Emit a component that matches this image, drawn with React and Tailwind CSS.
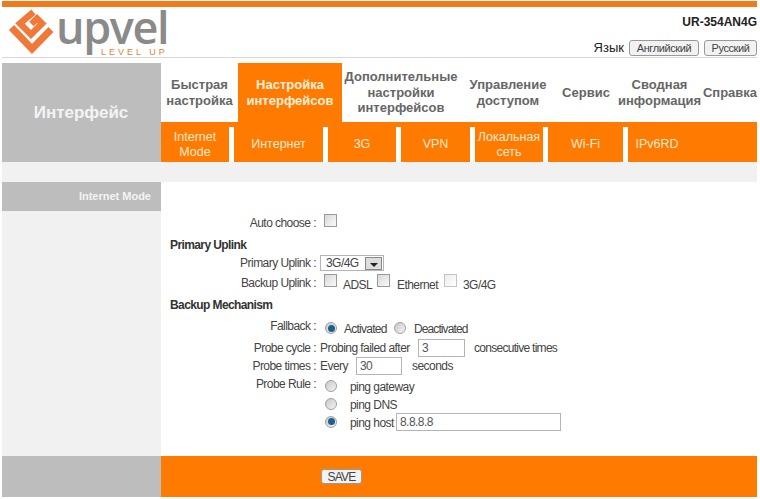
const font = 'font-["Liberation_Sans",Arial,sans-serif]'

function Check({ light }) {
  return (
    <span className={`inline-block h-[13px] w-[13px] shrink-0 border bg-gradient-to-br ${light ? 'border-[#c4c4c4] from-[#ececec] to-white' : 'border-[#9a9a9a] from-[#d8d8d8] to-[#fafafa]'}`} />
  )
}

function Radio({ on }) {
  return (
    <span className="flex h-[12px] w-[12px] shrink-0 items-center justify-center rounded-full border border-[#a0a0a0] bg-gradient-to-br from-[#c8c8c8] to-[#f4f4f4]">
      {on ? <span className="h-[7px] w-[7px] rounded-full bg-[#1d5f8f]" /> : null}
    </span>
  )
}

function Field({ className, children }) {
  return (
    <span className={`flex h-[18px] items-center border border-[#b5b5b5] bg-white pl-[3px] text-[#555] ${className}`}>
      {children}
    </span>
  )
}

function Row({ label, h, children }) {
  return (
    <div className={`flex items-center ${h}`}>
      <span className="w-[148px] pr-[2px] text-right text-[#444]">{label}</span>
      <div className="flex items-center text-[#444]">{children}</div>
    </div>
  )
}

const tabs = [
  { t: ['Быстрая', 'настройка'], w: 'w-[77px]' },
  { t: ['Настройка', 'интерфейсов'], w: 'w-[104px]', on: true },
  { t: ['Дополнительные', 'настройки', 'интерфейсов'], w: 'w-[118px]' },
  { t: ['Управление', 'доступом'], w: 'w-[96px]' },
  { t: ['Сервис'], w: 'w-[60px]' },
  { t: ['Сводная', 'информация'], w: 'w-[87px]' },
  { t: ['Справка'], w: 'w-[54px]' },
]

const subs = [
  { t: ['Internet', 'Mode'], w: 'w-[73px]' },
  { t: ['Интернет'], w: 'w-[94px]' },
  { t: ['3G'], w: 'w-[73px]' },
  { t: ['VPN'], w: 'w-[74px]' },
  { t: ['Локальная', 'сеть'], w: 'w-[73px]' },
  { t: ['Wi-Fi'], w: 'w-[80px]' },
  { t: ['IPv6RD'], w: 'w-[58px]' },
]

export default function App() {
  return (
    <div className={`${font} h-[499px] w-[760px] overflow-hidden bg-white pt-px pl-[2px] text-[12px] tracking-[-0.55px]`}>
      <div className="h-[6px] w-[755px] bg-[#f27a1a]" />
      <div className="flex h-[51px] w-[755px] border-b border-[#d8d8d8]">
        <div className="flex">
          <svg width="58" height="50" viewBox="2 7 58 50" className="shrink-0">
            <polyline points="11.5,27.5 32,49 51,29.5" fill="none" stroke="#f0793a" strokeWidth="7" />
            <polyline points="33.5,12 20,23.5 31,34.5 42,23.5 37,18.5 31.5,24" fill="none" stroke="#f0793a" strokeWidth="6.5" />
          </svg>
          <div className="relative -ml-[4px] w-[110px]">
            <span className="-mt-[5px] block font-['Open_Sans',sans-serif] text-[45px] leading-[50px] font-semibold tracking-[-1.4px] text-[#8a8a8a]">upvel</span>
            <span className="absolute top-[41px] left-[45px] text-[9px] leading-[9px] tracking-[3px] whitespace-nowrap text-[#e8823a]">LEVEL UP</span>
          </div>
        </div>
        <div className="ml-auto flex flex-col items-end">
          <div className="mt-[6px] text-[12px] font-bold tracking-normal text-[#222]">UR-354AN4G</div>
          <div className="mt-[7px] flex items-center gap-[5px]">
            <span className="text-[13px] tracking-normal text-[#222]">Язык</span>
            <span className="flex h-[16px] w-[70px] items-center justify-center rounded-[3px] border border-[#999] bg-[#f2f2f2] text-[11px] tracking-[-0.4px] text-[#444]">Английский</span>
            <span className="flex h-[16px] w-[53px] items-center justify-center rounded-[3px] border border-[#999] bg-[#f2f2f2] text-[11px] tracking-[-0.4px] text-[#444]">Русский</span>
          </div>
        </div>
      </div>
      <div className="mt-[5px] flex h-[99px] w-[755px]">
        <div className="flex w-[159px] shrink-0 items-center justify-center bg-[#bdbdbd] pr-px">
          <span className="text-[17px] font-bold tracking-normal text-[#f4f4f4]">Интерфейс</span>
        </div>
        <div className="flex flex-1 flex-col">
          <div className="flex h-[59px]">
            {tabs.map((tab) => (
              <div
                key={tab.t[0]}
                className={`flex shrink-0 flex-col items-center justify-center text-[13px] leading-[15.5px] font-bold tracking-normal ${tab.w} ${tab.on ? 'bg-[#ff7a00] text-[#fff0dc]' : 'text-[#666]'}`}
              >
                {tab.t.map((line) => (
                  <span key={line} className="whitespace-nowrap">{line}</span>
                ))}
              </div>
            ))}
          </div>
          <div className="flex h-[40px] items-end bg-[#ff7a00]">
            {subs.map((s, i) => (
              <div
                key={s.t[0]}
                className={`flex h-[35px] shrink-0 flex-col items-center justify-center text-[12.5px] leading-[15px] tracking-normal text-[#ffe9cf] ${s.w} ${i < 6 ? 'border-r-[5px] border-white' : ''}`}
              >
                {s.t.map((line) => (
                  <span key={line} className="whitespace-nowrap">{line}</span>
                ))}
              </div>
            ))}
          </div>
        </div>
      </div>
      <div className="h-[20px] w-[755px] bg-[#f1f1f1]" />
      <div className="flex h-[274px] w-[755px]">
        <div className="w-[159px] shrink-0 bg-[#f1f1f1]">
          <div className="flex h-[29px] items-center justify-end bg-[#bdbdbd] pr-[10px] text-[11px] font-bold tracking-normal text-[#f4f4f4]">Internet Mode</div>
        </div>
        <div className="flex-1 pt-[31px] pl-[9px]">
          <Row label="Auto choose :" h="h-[20px]"><span className="ml-[6px]"><Check /></span></Row>
          <div className="mt-[2px] flex h-[20px] items-center font-bold tracking-[-0.6px] text-[#333]">Primary Uplink</div>
          <Row label="Primary Uplink :" h="h-[16px]">
            <span className="ml-[2px] flex h-[16px] w-[64px] items-center border border-[#b5b5b5] pl-[5px] text-[#444]">
              3G/4G
              <span className="mt-px mr-[1px] ml-auto flex h-[13px] w-[17px] items-center justify-center border border-[#888] bg-[#ddd]">
                <span className="mt-[3px] border-x-[4px] border-t-[4px] border-x-transparent border-t-[#222]" />
              </span>
            </span>
          </Row>
          <Row label="Backup Uplink :" h="h-[23px]">
            <span className="ml-[6px]"><Check /></span>
            <span className="mt-[4px] ml-[6px] w-[34px]">ADSL</span>
            <span><Check /></span>
            <span className="mt-[4px] ml-[7px] w-[47px]">Ethernet</span>
            <span><Check light /></span>
            <span className="mt-[4px] ml-[6px]">3G/4G</span>
          </Row>
          <div className="flex h-[22px] items-center font-bold tracking-[-0.6px] text-[#333]">Backup Mechanism</div>
          <Row label="Fallback :" h="h-[20px]">
            <span className="mt-[4px] ml-[7px]"><Radio on /></span>
            <span className="mt-[6px] ml-[7px] w-[50px] tracking-[-0.75px]">Activated</span>
            <span className="mt-[4px]"><Radio /></span>
            <span className="mt-[6px] ml-[8px] tracking-[-0.9px]">Deactivated</span>
          </Row>
          <Row label="Probe cycle :" h="mt-[3px] h-[18px]">
            <span className="ml-[2px] w-[98px]">Probing failed after</span>
            <Field className="w-[47px]">3</Field>
            <span className="ml-[9px] tracking-[-0.72px]">consecutive times</span>
          </Row>
          <Row label="Probe times :" h="h-[18px]">
            <span className="ml-[2px] w-[36px]">Every</span>
            <Field className="w-[46px]">30</Field>
            <span className="ml-[10px]">seconds</span>
          </Row>
          <Row label="Probe Rule :" h="h-[18px]">
            <span className="mt-[3px] ml-[7px]"><Radio /></span>
            <span className="mt-[6px] ml-[13px]">ping gateway</span>
          </Row>
          <Row label="" h="h-[19px]">
            <span className="mt-[2px] ml-[7px]"><Radio /></span>
            <span className="mt-[5px] ml-[13px]">ping DNS</span>
          </Row>
          <Row label="" h="h-[19px]">
            <span className="ml-[7px]"><Radio on /></span>
            <span className="mt-[3px] ml-[13px] w-[46px]">ping host</span>
            <Field className="w-[165px]">8.8.8.8</Field>
          </Row>
        </div>
      </div>
      <div className="flex h-[41px] w-[755px]">
        <div className="w-[159px] shrink-0 bg-[#bdbdbd]" />
        <div className="flex flex-1 items-center bg-[#ff7a00] pl-[160px]">
          <span className="flex h-[15px] w-[41px] items-center justify-center rounded-[3px] border border-[#999] bg-[#f2f2f2] tracking-[-0.8px] text-[#444]">SAVE</span>
        </div>
      </div>
    </div>
  )
}
